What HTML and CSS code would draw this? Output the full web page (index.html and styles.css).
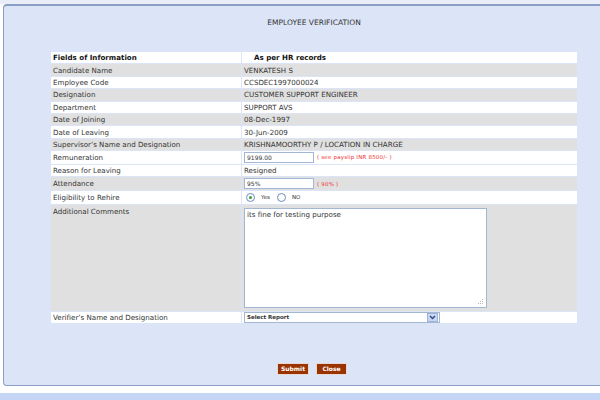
FILE: index.html
```html
<!DOCTYPE html>
<html>
<head>
<meta charset="utf-8">
<link rel="stylesheet" href="styles.css">
</head>
<body>
<div class="top"></div>
<div class="panel">
  <div class="title">EMPLOYEE VERIFICATION</div>
  <table class="grid">
    <tr class="r hd"><td class="c1">Fields of Information</td><td class="c2 hd2">As per HR records</td></tr>
    <tr class="r g"><td>Candidate Name</td><td>VENKATESH S</td></tr>
    <tr class="r w"><td>Employee Code</td><td>CCSDEC1997000024</td></tr>
    <tr class="r g"><td>Designation</td><td>CUSTOMER SUPPORT ENGINEER</td></tr>
    <tr class="r w"><td>Department</td><td>SUPPORT AVS</td></tr>
    <tr class="r g"><td>Date of Joining</td><td>08-Dec-1997</td></tr>
    <tr class="r w"><td>Date of Leaving</td><td>30-Jun-2009</td></tr>
    <tr class="r g"><td>Supervisor’s Name and Designation</td><td>KRISHNAMOORTHY P / LOCATION IN CHARGE</td></tr>
    <tr class="r2 w"><td>Remuneration</td><td><span class="inp">9199.00</span><span class="note">( see payslip INR 8500/- )</span></td></tr>
    <tr class="r3 w"><td>Reason for Leaving</td><td>Resigned</td></tr>
    <tr class="r2 g"><td>Attendance</td><td><span class="inp">95%</span><span class="note">( 90% )</span></td></tr>
    <tr class="r2 w"><td>Eligibility to Rehire</td><td><span class="radio on"></span><span class="opt">Yes</span><span class="radio"></span><span class="opt">NO</span></td></tr>
    <tr class="rc g"><td class="top-al">Additional Comments</td><td><div class="ta-wrap"><textarea class="ta">its fine for testing purpose</textarea><svg class="grip" width="6" height="6" viewBox="0 0 6 6"><g fill="#b5b5b5"><rect x="4" y="0" width="1" height="1"/><rect x="2" y="2" width="1" height="1"/><rect x="4" y="2" width="1" height="1"/><rect x="0" y="4" width="1" height="1"/><rect x="2" y="4" width="1" height="1"/><rect x="4" y="4" width="1" height="1"/></g></svg></div></td></tr>
    <tr class="r w"><td>Verifier’s Name and Designation</td><td><div class="sel"><span class="sel-t">Select Report</span><span class="sel-b"><svg width="7" height="5" viewBox="0 0 7 5"><path d="M1 1 L3.5 3.5 L6 1" fill="none" stroke="#2b4b86" stroke-width="1.4"/></svg></span></div></td></tr>
  </table>
  <div class="btns">
    <button class="btn b1">Submit</button>
    <button class="btn b2">Close</button>
  </div>
</div>
<div class="gap"></div>
<div class="strip"></div>
</body>
</html>
```
FILE: styles.css
```css
html, body {
  margin: 0;
  padding: 0;
}
body {
  width: 600px;
  height: 400px;
  overflow: hidden;
  background: #ffffff;
  font-family: "DejaVu Sans", Verdana, sans-serif;
  color: #333333;
}
.top {
  height: 4px;
  background: #e9edf7;
}
.panel {
  margin-left: 3px;
  width: 620px;
  height: 379px;
  background: #dce4f7;
  border: 1px solid #8b9ec6;
  border-top-width: 2px;
  border-right: none;
  border-radius: 4px 0 0 4px;
  display: flex;
  flex-direction: column;
  align-items: center;
}
.title {
  margin-top: 12px;
  font-size: 7.5px;
  line-height: 9px;
  color: #333;
}
.grid {
  margin-top: 24px;
  width: 528px;
  border-collapse: separate;
  border-spacing: 1px;
  font-size: 7.1px;
  table-layout: fixed;
}
.grid td {
  padding: 0 2px;
  vertical-align: middle;
  white-space: nowrap;
  overflow: hidden;
}
.grid td.c1 { width: 186px; }
.r td { height: 11.4px; }
.r2 td { height: 12.6px; }
.r3 td { height: 11.6px; }
.rc td { height: 104px; }
.grid td.top-al { vertical-align: top; padding-top: 2px; }
.hd td { background: #ffffff; font-weight: bold; color: #111; }
.grid td.hd2 { padding-left: 12px; }
.g td { background: #e0e0e0; }
.w td { background: #ffffff; }
.inp {
  display: inline-block;
  vertical-align: middle;
  box-sizing: border-box;
  width: 70px;
  height: 11px;
  border: 1px solid #a3b6d4;
  background: #fff;
  font-size: 6px;
  line-height: 9px;
  padding: 0 2px;
  color: #333;
}
.note {
  display: inline-block;
  vertical-align: middle;
  margin-left: 3px;
  font-size: 5.5px;
  color: #ee3333;
  letter-spacing: 0.2px;
}
.radio {
  display: inline-block;
  vertical-align: middle;
  box-sizing: border-box;
  width: 9px;
  height: 9px;
  border-radius: 50%;
  border: 1px solid #6f8fbd;
  background: #fbfcfe;
  margin-left: 2px;
  position: relative;
}
.radio.on::after {
  content: "";
  position: absolute;
  left: 2px;
  top: 2px;
  width: 3px;
  height: 3px;
  border-radius: 50%;
  background: #2fa52f;
}
.opt {
  display: inline-block;
  vertical-align: middle;
  font-size: 5.5px;
  margin-left: 6px;
  margin-right: 5px;
}
.ta-wrap {
  position: relative;
  width: 243px;
  height: 100px;
}
.ta {
  display: block;
  box-sizing: border-box;
  width: 243px;
  height: 100px;
  margin: 0;
  border: 1px solid #a3b6d4;
  background: #fff;
  font-family: "DejaVu Sans", Verdana, sans-serif;
  font-size: 7.1px;
  color: #333;
  padding: 1px 2px;
  outline: none;
  resize: none;
}
.grip {
  position: absolute;
  right: 3px;
  bottom: 3px;
}
.sel {
  display: flex;
  align-items: center;
  box-sizing: border-box;
  width: 196px;
  height: 11px;
  border: 1px solid #a3b6d4;
  background: #fff;
}
.sel-t {
  flex: 1;
  font-size: 5.5px;
  font-weight: bold;
  color: #333;
  padding-left: 2px;
}
.sel-b {
  width: 9px;
  height: 7px;
  margin-right: 1px;
  background: #c8d7f1;
  border: 1px solid #9fb3d6;
  display: flex;
  align-items: center;
  justify-content: center;
}
.btns {
  margin-top: auto;
  margin-bottom: 10px;
  display: flex;
  gap: 7px;
  margin-right: 4px;
}
.btn {
  box-sizing: border-box;
  height: 12px;
  padding: 0;
  border: 1px solid #e9d8d2;
  background: #993300;
  color: #ffffff;
  font-family: "DejaVu Sans", Verdana, sans-serif;
  font-weight: bold;
  font-size: 6px;
  line-height: 10px;
}
.b1 { width: 32px; }
.b2 { width: 31px; }
.gap {
  height: 7px;
  background: #ffffff;
}
.strip {
  height: 8px;
  background: #c5d5f6;
}
```
